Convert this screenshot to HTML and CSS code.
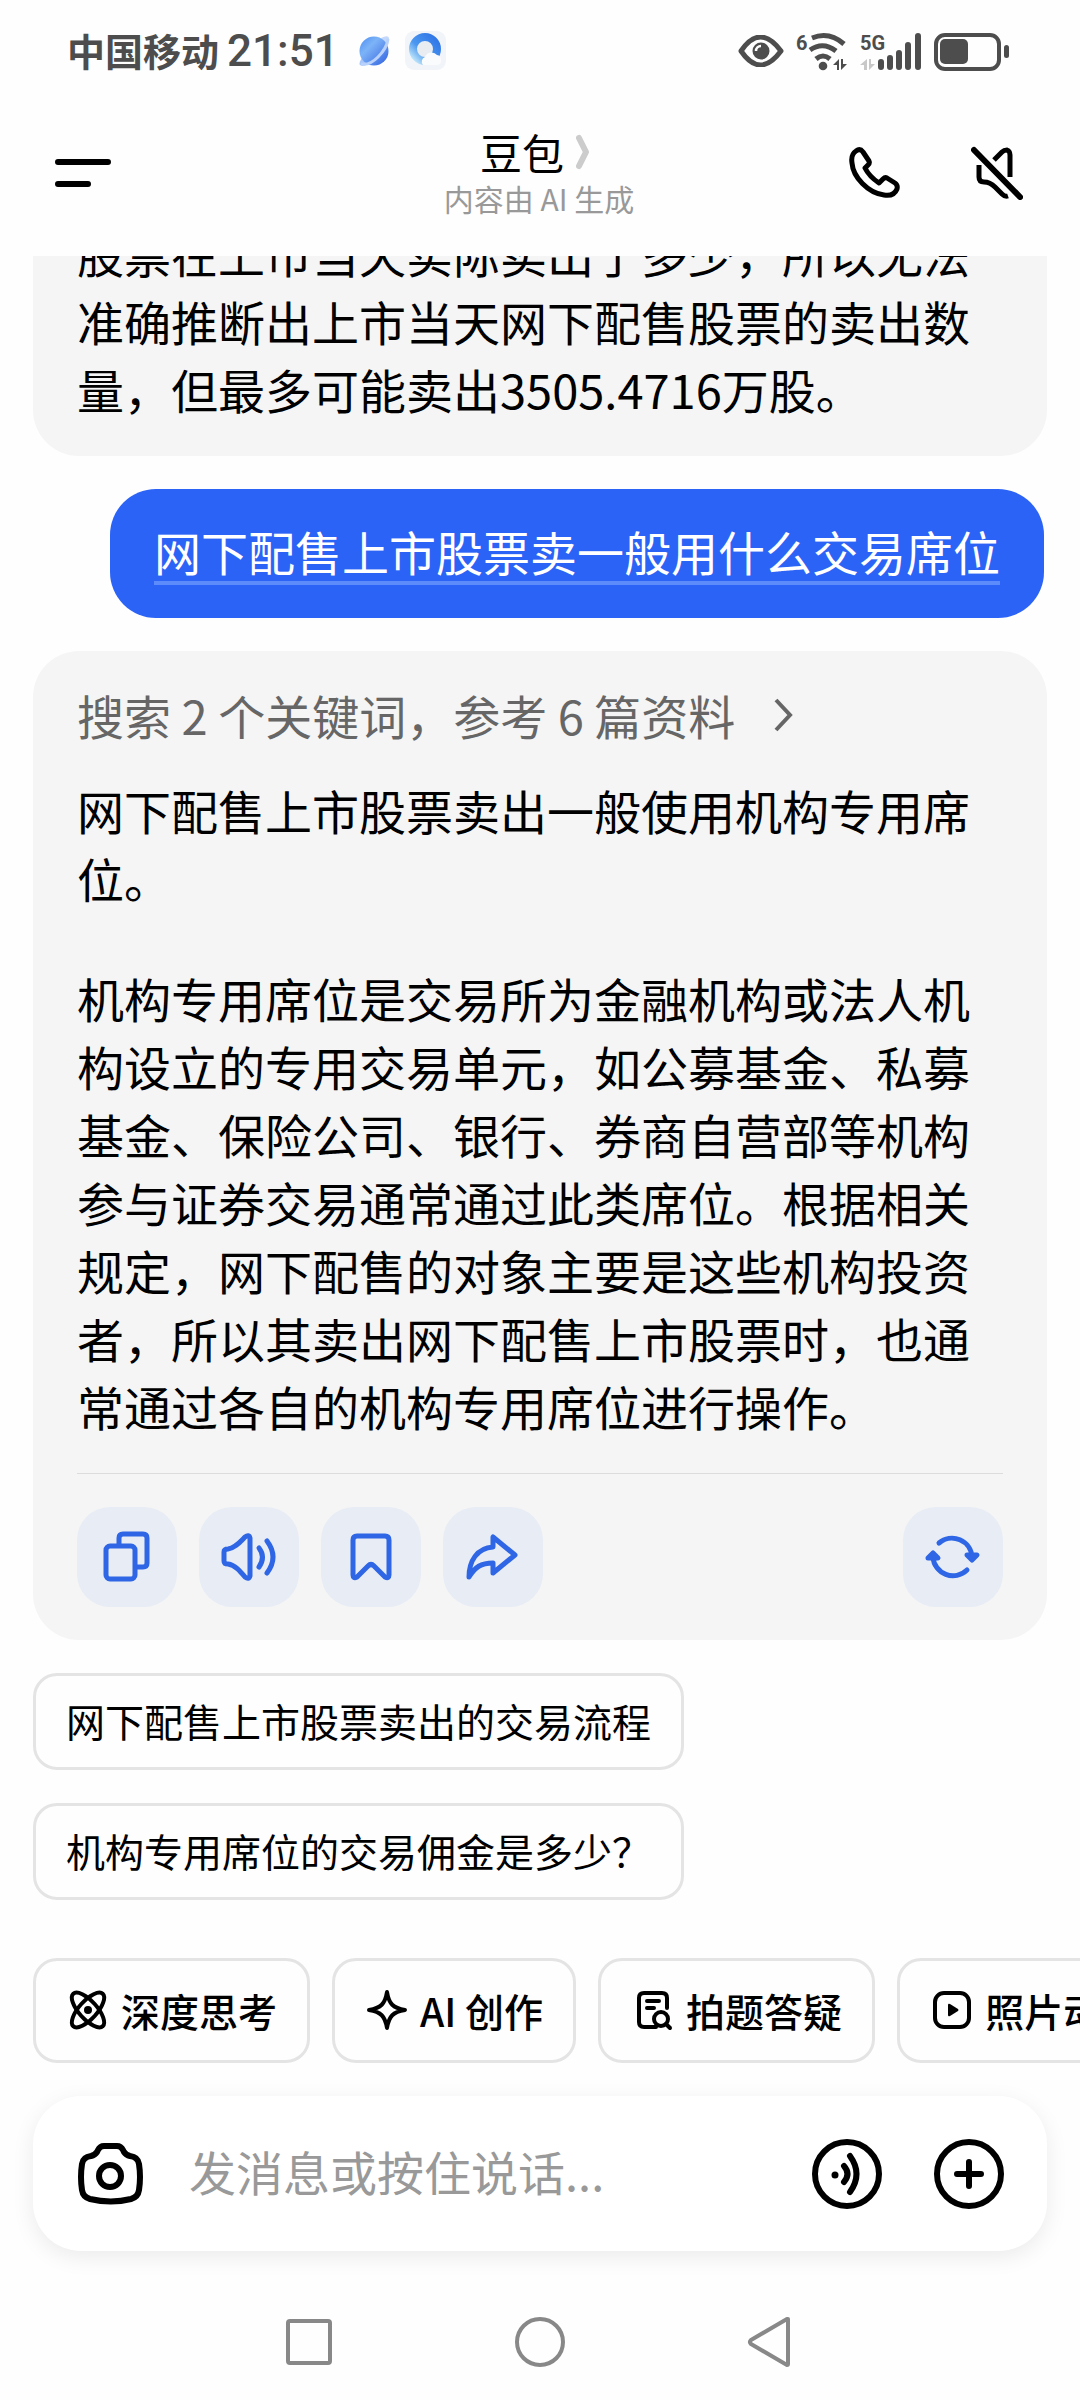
FILE: index.html
```html
<!DOCTYPE html>
<html lang="zh-CN">
<head>
 <meta charset="utf-8">
 <meta name="viewport" content="width=device-width, initial-scale=1">
 <title>豆包</title>
 <link rel="stylesheet" href="styles.css">
</head>
<body>
 <!-- phone status bar -->
 <div class="status-bar">
  <span class="carrier">中国移动</span>
  <span class="clock">21:51</span>
  <svg class="planet" width="32" height="32" viewBox="0 0 32 32">
   <defs>
    <linearGradient id="planet-fill" x1="0" y1="0" x2="1" y2="1">
     <stop offset="0" stop-color="#4a8af2"/>
     <stop offset="0.35" stop-color="#7db4f7"/>
     <stop offset="1" stop-color="#2f5fe0"/>
    </linearGradient>
   </defs>
   <path d="M22 3Q30-1 30 4Q30 7 26 11" fill="#c3d8fb"/>
   <path d="M5 20Q-1 28 1 30Q4 32 10 29" fill="#a9c6fa"/>
   <circle cx="15" cy="16" r="14.5" fill="url(#planet-fill)"/>
   <path d="M2 29Q10 31 19 22T29 4" fill="none" stroke="#b9d2fc" stroke-width="3"/>
  </svg>
  <svg class="browser" width="42" height="40" viewBox="0 0 42 40">
   <defs>
    <linearGradient id="ring-fill" x1="1" y1="0" x2="0" y2="1">
     <stop offset="0" stop-color="#2f74e6"/>
     <stop offset="0.6" stop-color="#4c98f0"/>
     <stop offset="1" stop-color="#c8ecfb"/>
    </linearGradient>
   </defs>
   <rect x="0" y="0" width="41" height="39" rx="9" fill="#f1f4f8"/>
   <circle cx="20" cy="18" r="12" fill="#e9edf2" stroke="url(#ring-fill)" stroke-width="8"/>
   <path d="M18 34a5 5 0 0 1 2-8a7 7 0 0 1 12-2a5 5 0 0 1 4 5q1 5-5 5z" fill="#fafbfd"/>
  </svg>
  <div class="status-icons">
   <svg width="46" height="32" viewBox="0 0 46 32">
    <path d="M3 16Q22 -12 43 16Q22 44 3 16z" fill="none" stroke="#4d4d4d" stroke-width="5" stroke-linejoin="round"/>
    <circle cx="23" cy="16" r="8.5" fill="#4d4d4d"/>
    <path d="M18 16a5 5 0 0 1 5-5" fill="none" stroke="#fff" stroke-width="2.5"/>
   </svg>
   <div class="signal">
    <span class="tiny-label">6</span>
    <svg width="52" height="40" viewBox="0 0 52 40">
     <path d="M16 7Q33 0 48 13M14 19Q27 10 40 20M20 28Q27 22 34 28" fill="none" stroke="#4d4d4d" stroke-width="5"/>
     <circle cx="27" cy="35" r="4.3" fill="#4d4d4d"/>
     <path d="M43 28v11h-2v-5h-4zM45 28v11l6-6h-4v-5z" fill="#4d4d4d"/>
    </svg>
   </div>
   <div class="signal">
    <span class="tiny-label">5G</span>
    <svg width="62" height="40" viewBox="0 0 62 40">
     <path d="M7 28v11h-3v-5h-4zM9 28v11l6-6h-4v-5z" fill="#c8c8c8"/>
     <path d="M21 31v5M30 27v9M39 22v14M48 14v22M58 5v31" stroke="#4d4d4d" stroke-width="6" stroke-linecap="round"/>
    </svg>
   </div>
   <svg width="76" height="40" viewBox="0 0 76 40">
    <rect x="2" y="4" width="63" height="34" rx="9" fill="none" stroke="#4d4d4d" stroke-width="4"/>
    <rect x="6" y="8" width="28" height="25" rx="5" fill="#4d4d4d"/>
    <rect x="70" y="14" width="5" height="13" rx="2.5" fill="#4d4d4d"/>
   </svg>
  </div>
 </div>

 <!-- chat title and call controls -->
 <header class="chat-header">
  <button class="icon-button" aria-label="菜单">
   <svg width="56" height="30" viewBox="0 0 56 30">
    <path d="M3 4h50M3 26h30" stroke="#000" stroke-width="6" stroke-linecap="round"/>
   </svg>
  </button>
  <div class="chat-title">
   <h1>豆包
    <svg width="14" height="36" viewBox="0 0 14 36">
     <path d="M3 4L10 18L3 32" fill="none" stroke="#ccc" stroke-width="6" stroke-linecap="round" stroke-linejoin="round"/>
    </svg>
   </h1>
   <p>内容由 AI 生成</p>
  </div>
  <div class="header-actions">
   <button class="icon-button" aria-label="打电话">
    <svg width="52" height="52" viewBox="0 0 52 52">
     <path d="M7 4q4-3 7 1L20 14q1 2-1 4L16 21C19 27 24 32 30 36L34 32q2-2 4-1L46 36q3 2 2 6C46 47 41 49 35 48C19 46 4 30 3 16C2 10 4 6 7 4z" fill="none" stroke="#000" stroke-width="5" stroke-linejoin="round"/>
    </svg>
   </button>
   <button class="icon-button" aria-label="静音">
    <svg width="52" height="54" viewBox="0 0 52 54">
     <path d="M3 4L49 51" stroke="#000" stroke-width="6" stroke-linecap="round"/>
     <path d="M23 14L31 6Q33 4 36 4Q39 5 39 9V31M8 19V31Q8 36 13 36Q19 36 24 41L31 48Q34 51 37 50" fill="none" stroke="#000" stroke-width="5"/>
    </svg>
   </button>
  </div>
 </header>

 <!-- messages, kept scrolled to the newest one -->
 <main class="chat-list">
  <div class="bubble bot-bubble">
   <p>股票在上市当天实际卖出了多少，所以无法准确推断出上市当天网下配售股票的卖出数量，但最多可能卖出3505.4716万股。</p>
  </div>

  <div class="bubble user-bubble"><a href="#">网下配售上市股票卖一般用什么交易席位</a></div>

  <div class="bubble bot-bubble">
   <button class="search-summary">搜索 2 个关键词，参考 6 篇资料
    <svg width="20" height="34" viewBox="0 0 20 34">
     <path d="M3 2L17 17L3 32" fill="none" stroke="#666" stroke-width="4"/>
    </svg>
   </button>
   <div class="answer">
    <p>网下配售上市股票卖出一般使用机构专用席位。</p>
    <p>机构专用席位是交易所为金融机构或法人机构设立的专用交易单元，如公募基金、私募基金、保险公司、银行、券商自营部等机构参与证券交易通常通过此类席位。根据相关规定，网下配售的对象主要是这些机构投资者，所以其卖出网下配售上市股票时，也通常通过各自的机构专用席位进行操作。</p>
   </div>
   <div class="answer-actions">
    <button class="action-button" aria-label="复制">
     <svg viewBox="0 0 100 100">
      <rect x="29" y="39" width="29" height="33" rx="4"/>
      <path d="M42 38v-7q0-4 4-4h20q4 0 4 4v25q0 4-4 4h-7"/>
     </svg>
    </button>
    <button class="action-button" aria-label="朗读">
     <svg viewBox="0 0 100 100">
      <path d="M25 45q0-3 4-3C36 41 41 35 46 30q4-3 5 1V69q-1 4-5 1C41 64 36 58 29 57q-4 0-4-3z"/>
      <path d="M60 41Q67 50 60 60M68 34Q80 50 68 66"/>
     </svg>
    </button>
    <button class="action-button" aria-label="收藏">
     <svg viewBox="0 0 100 100">
      <path d="M36 29h28q4 0 4 4v35q0 4-4 2L53 59q-3-3-6 0L36 70q-4 2-4-2V33q0-4 4-4z"/>
     </svg>
    </button>
    <button class="action-button" aria-label="分享">
     <svg viewBox="0 0 100 100">
      <path d="M50 30v10C34 41 26 54 26 70C32 60 38 56 50 56v10L72 48z"/>
     </svg>
    </button>
    <button class="action-button refresh" aria-label="重新生成">
     <svg viewBox="0 0 100 100">
      <path d="M36 36A20 20 0 0 1 69 50M64 48l5 5l5-5zM30 50A20 20 0 0 0 64 63M25 51l5-5l5 5z"/>
     </svg>
    </button>
   </div>
  </div>

  <button class="suggestion">网下配售上市股票卖出的交易流程</button>
  <button class="suggestion">机构专用席位的交易佣金是多少？</button>
 </main>

 <!-- shortcuts, the row runs past the right edge -->
 <div class="shortcuts">
  <button class="shortcut">
   <svg viewBox="0 0 44 44">
    <ellipse cx="22" cy="22" rx="22" ry="9" transform="rotate(48 22 22)"/>
    <ellipse cx="22" cy="22" rx="22" ry="9" transform="rotate(-48 22 22)"/>
    <circle class="solid" cx="22" cy="22" r="4"/>
   </svg>
   深度思考
  </button>
  <button class="shortcut">
   <svg viewBox="0 0 44 44">
    <path d="M22 4C24 16 28 20 40 22C28 24 24 28 22 40C20 28 16 24 4 22C16 20 20 16 22 4z"/>
   </svg>
   AI 创作
  </button>
  <button class="shortcut">
   <svg viewBox="0 0 44 44">
    <path d="M25 39H13q-5 0-5-5V10q0-5 5-5h18q5 0 5 5v10M16 13h12M16 20h7"/>
    <circle cx="30" cy="31" r="7"/>
    <path d="M35 36l4 4"/>
   </svg>
   拍题答疑
  </button>
  <button class="shortcut">
   <svg viewBox="0 0 44 44">
    <rect x="5" y="5" width="34" height="34" rx="9"/>
    <path class="solid" d="M18 17v10q0 2 2 1l8-5q1-1 0-2l-8-5q-2-1-2 1z"/>
   </svg>
   照片动起来
  </button>
 </div>

 <!-- message box -->
 <form class="composer">
  <button type="button" class="icon-button" aria-label="拍照">
   <svg width="68" height="66" viewBox="0 0 68 66">
    <path d="M27 5h13q4 0 6 4l1 2q2 3 6 4q8 1 9 8q2 13 0 26q-1 7-8 9Q34 63 13 58q-7-2-8-9q-2-13 0-26q1-7 9-8q4-1 6-4l1-2q2-4 6-4z" fill="none" stroke="#000" stroke-width="6"/>
    <circle cx="33" cy="35" r="11" fill="none" stroke="#000" stroke-width="6"/>
   </svg>
  </button>
  <input type="text" class="message-input" placeholder="发消息或按住说话..." aria-label="发消息">
  <button type="button" class="icon-button" aria-label="语音">
   <svg width="70" height="70" viewBox="0 0 70 70">
    <circle cx="35" cy="35" r="32" fill="none" stroke="#000" stroke-width="6"/>
    <circle cx="23" cy="36" r="3.5"/>
    <path d="M32 27Q39 35 32 43M38 17Q51 35 38 53" fill="none" stroke="#000" stroke-width="6" stroke-linecap="round"/>
   </svg>
  </button>
  <button type="button" class="icon-button" aria-label="更多">
   <svg width="70" height="70" viewBox="0 0 70 70">
    <circle cx="35" cy="35" r="32" fill="none" stroke="#000" stroke-width="6"/>
    <path d="M23 35h24M35 23v24" stroke="#000" stroke-width="6" stroke-linecap="round"/>
   </svg>
  </button>
 </form>

 <!-- system navigation -->
 <nav class="system-nav">
  <button class="icon-button" aria-label="最近任务">
   <svg width="60" height="60" viewBox="0 0 60 60"><rect x="8" y="9" width="42" height="42" rx="2"/></svg>
  </button>
  <button class="icon-button" aria-label="主屏幕">
   <svg width="60" height="60" viewBox="0 0 60 60"><circle cx="30" cy="30" r="23"/></svg>
  </button>
  <button class="icon-button" aria-label="返回">
   <svg width="60" height="60" viewBox="0 0 60 60"><path d="M48 7q0 0 0 1V52q0 1-1 1L11 32q-2-2 0-4L47 7z"/></svg>
  </button>
 </nav>
</body>
</html>
```

FILE: styles.css
```css
* {
 box-sizing: border-box;
}

body {
 display: flex;
 flex-direction: column;
 height: 100vh;
 margin: 0;
 background: #fefefe;
 color: #000;
 font-family: "Noto Sans CJK SC", "Noto Sans", sans-serif;
}

h1, p {
 margin: 0;
 font-weight: 400;
}

button {
 padding: 0;
 border: 0;
 background: none;
 color: inherit;
 font: inherit;
 cursor: pointer;
}

svg {
 display: block;
 flex: none;
}

.icon-button {
 flex: none;
}

/* status bar */
.status-bar {
 display: flex;
 flex: none;
 align-items: center;
 height: 102px;
 padding: 0 70px 0 67px;
 color: #4d4d4d;
}

.carrier {
 padding-bottom: 4px;
 font-size: 38px;
 font-weight: 700;
}

.clock {
 margin-left: 8px;
 font-family: Roboto, sans-serif;
 font-size: 44px;
 font-weight: 500;
}

.planet {
 margin-left: 20px;
}

.browser {
 margin-left: 14px;
}

.status-icons {
 display: flex;
 align-items: center;
 gap: 12px;
 margin-left: auto;
}

/* the small label lies over the top left corner of its icon */
.signal {
 position: relative;
}

.tiny-label {
 position: absolute;
 top: 0;
 left: 0;
 font-family: Roboto, sans-serif;
 font-size: 20px;
 font-weight: 700;
 line-height: 24px;
}

/* header */
.chat-header {
 display: grid;
 flex: none;
 grid-template-columns: 1fr auto 1fr;
 align-items: center;
 justify-items: start;
 height: 154px;
 padding: 0 57px 12px 55px;
}

.chat-title {
 text-align: center;
}

.chat-title h1 {
 display: flex;
 align-items: center;
 justify-content: center;
 gap: 12px;
 padding-right: 8px;
 font-size: 42px;
 line-height: 50px;
}

.chat-title p {
 color: #999;
 font-size: 30px;
 line-height: 42px;
}

.header-actions {
 display: flex;
 gap: 70px;
 justify-self: end;
}

/* messages */
.chat-list {
 display: flex;
 flex: 1;
 flex-direction: column;
 align-items: flex-start;
 justify-content: flex-end;
 gap: 33px;
 min-height: 0;
 padding: 0 33px 58px;
 overflow: hidden;
}

.bubble {
 flex: none;
 padding: 30px 44px 33px;
 border-radius: 46px;
 font-size: 47px;
 line-height: 68px;
}

.bot-bubble {
 align-self: stretch;
 background: #f5f5f5;
}

.user-bubble {
 align-self: flex-end;
 margin-right: 3px;
 padding: 28px 44px 33px;
 background: #2b63f6;
}

.user-bubble a {
 color: #fff;
 text-decoration: underline 4px #5c8cfc;
 text-decoration-skip-ink: none;
 text-underline-offset: 10px;
}

.search-summary {
 display: flex;
 align-items: center;
 gap: 38px;
 margin-bottom: 27px;
 color: #666;
}

.answer {
 display: grid;
 gap: 52px;
 padding-bottom: 33px;
 border-bottom: 1px solid #dcdcdc;
}

.answer-actions {
 display: flex;
 gap: 22px;
 padding-top: 33px;
}

.action-button {
 width: 100px;
 height: 100px;
 border-radius: 33px;
 background: #e7ecf5;
}

.action-button svg {
 fill: none;
 stroke: #2e66e6;
 stroke-width: 5;
 stroke-linecap: round;
 stroke-linejoin: round;
}

.refresh {
 margin-left: auto;
}

/* suggested questions and shortcuts */
.suggestion {
 flex: none;
 height: 97px;
 padding: 0 30px 4px;
 border: 3px solid #e4e4e4;
 border-radius: 24px;
 font-size: 39px;
}

.shortcuts {
 display: flex;
 flex: none;
 gap: 22px;
 padding: 0 33px;
 overflow: hidden;
}

.shortcut {
 display: flex;
 flex: none;
 align-items: center;
 gap: 11px;
 height: 105px;
 padding: 0 30px 2px;
 border: 3px solid #e4e4e4;
 border-radius: 24px;
 font-size: 39px;
 font-weight: 500;
 white-space: nowrap;
}

.shortcut svg {
 width: 44px;
 height: 44px;
 fill: none;
 stroke: #000;
 stroke-width: 4;
 stroke-linecap: round;
 stroke-linejoin: round;
}

.shortcut .solid {
 fill: #000;
 stroke: none;
}

/* message box */
.composer {
 display: flex;
 flex: none;
 align-items: center;
 gap: 52px;
 height: 155px;
 margin: 33px;
 padding: 0 43px 0 44px;
 border-radius: 48px;
 background: #fff;
 box-shadow: 0 6px 22px rgba(0, 0, 0, 0.08);
}

.message-input {
 flex: 1;
 min-width: 0;
 margin-left: -8px;
 padding: 0 0 6px;
 border: 0;
 outline: 0;
 background: none;
 font: inherit;
 font-size: 47px;
}

.message-input::placeholder {
 color: #999;
}

/* system navigation */
.system-nav {
 display: flex;
 flex: none;
 align-items: center;
 justify-content: center;
 gap: 170px;
 height: 116px;
}

.system-nav svg {
 fill: none;
 stroke: #888;
 stroke-width: 4;
 stroke-linejoin: round;
}
```
